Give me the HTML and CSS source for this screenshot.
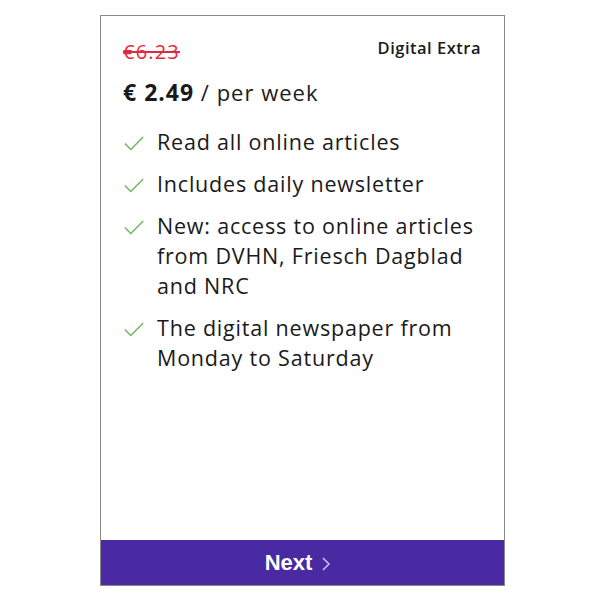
FILE: index.html
```html
<!DOCTYPE html>
<html lang="en">
<head>
    <meta charset="UTF-8">
    <title>Digital Extra</title>
    <link rel="stylesheet" href="styles.css">
</head>
<body>
    <div class="card">
        <div class="card-body">
            <div class="top-row">
                <span class="old-price">€6.23</span>
                <span class="plan-name">Digital Extra</span>
            </div>
            <div class="price">
                <strong>€ 2.49</strong> / per week
            </div>
            <ul class="features">
                <li>
                    <svg class="check" viewBox="0 0 24 24"><path d="M2 12.5 L8.5 19 L22 5.5"/></svg>
                    <span>Read all online articles</span>
                </li>
                <li>
                    <svg class="check" viewBox="0 0 24 24"><path d="M2 12.5 L8.5 19 L22 5.5"/></svg>
                    <span>Includes daily newsletter</span>
                </li>
                <li>
                    <svg class="check" viewBox="0 0 24 24"><path d="M2 12.5 L8.5 19 L22 5.5"/></svg>
                    <span>New: access to online articles from DVHN, Friesch Dagblad and NRC</span>
                </li>
                <li>
                    <svg class="check" viewBox="0 0 24 24"><path d="M2 12.5 L8.5 19 L22 5.5"/></svg>
                    <span>The digital newspaper from Monday to Saturday</span>
                </li>
            </ul>
        </div>
        <button class="next-button">
            Next
            <svg class="chevron" viewBox="0 0 8 14"><path d="M1 1 L7 7 L1 13"/></svg>
        </button>
    </div>
</body>
</html>
```

FILE: styles.css
```css
body {
    margin: 0;
    height: 600px;
    background-color: white;
    font-family: "Open Sans", sans-serif;
    color: #1a1a1a;
}
.card {
    box-sizing: border-box;
    width: 405px;
    height: 571px;
    margin: 15px 0 0 100px;
    border: 1px solid #8a8a8a;
    display: flex;
    flex-direction: column;
}
.card-body {
    flex: 1;
    padding: 22px 23px 0 22px;
}
.top-row {
    display: flex;
    justify-content: space-between;
    align-items: flex-start;
}
.old-price {
    color: #e0293b;
    font-size: 20px;
    line-height: 28px;
    letter-spacing: 1.2px;
    text-decoration: line-through;
}
.plan-name {
    font-size: 16.5px;
    line-height: 20px;
    font-weight: 600;
    letter-spacing: 0.5px;
}
.price {
    margin-top: 11px;
    font-size: 22px;
    line-height: 30px;
    letter-spacing: 1px;
}
.price strong {
    font-size: 23px;
    font-weight: 700;
}
.features {
    list-style: none;
    margin: 20px 0 0 0;
    padding: 0;
}
.features li {
    display: flex;
    gap: 12px;
    margin-bottom: 12px;
    font-size: 21.5px;
    line-height: 30px;
    letter-spacing: 0.8px;
}
.check {
    flex: none;
    width: 22px;
    height: 22px;
    margin-top: 5px;
    fill: none;
    stroke: #6cb95c;
    stroke-width: 1.6;
}
.next-button {
    height: 45px;
    border: none;
    background-color: #4a2aa2;
    color: white;
    font-family: "Liberation Sans", Arial, sans-serif;
    font-size: 22px;
    font-weight: bold;
    display: flex;
    align-items: center;
    justify-content: center;
    gap: 10px;
    padding: 0 10px 0 0;
    cursor: pointer;
}
.chevron {
    width: 8px;
    height: 14px;
    margin-top: 3px;
    fill: none;
    stroke: #cfc6ee;
    stroke-width: 1.5;
}
```
